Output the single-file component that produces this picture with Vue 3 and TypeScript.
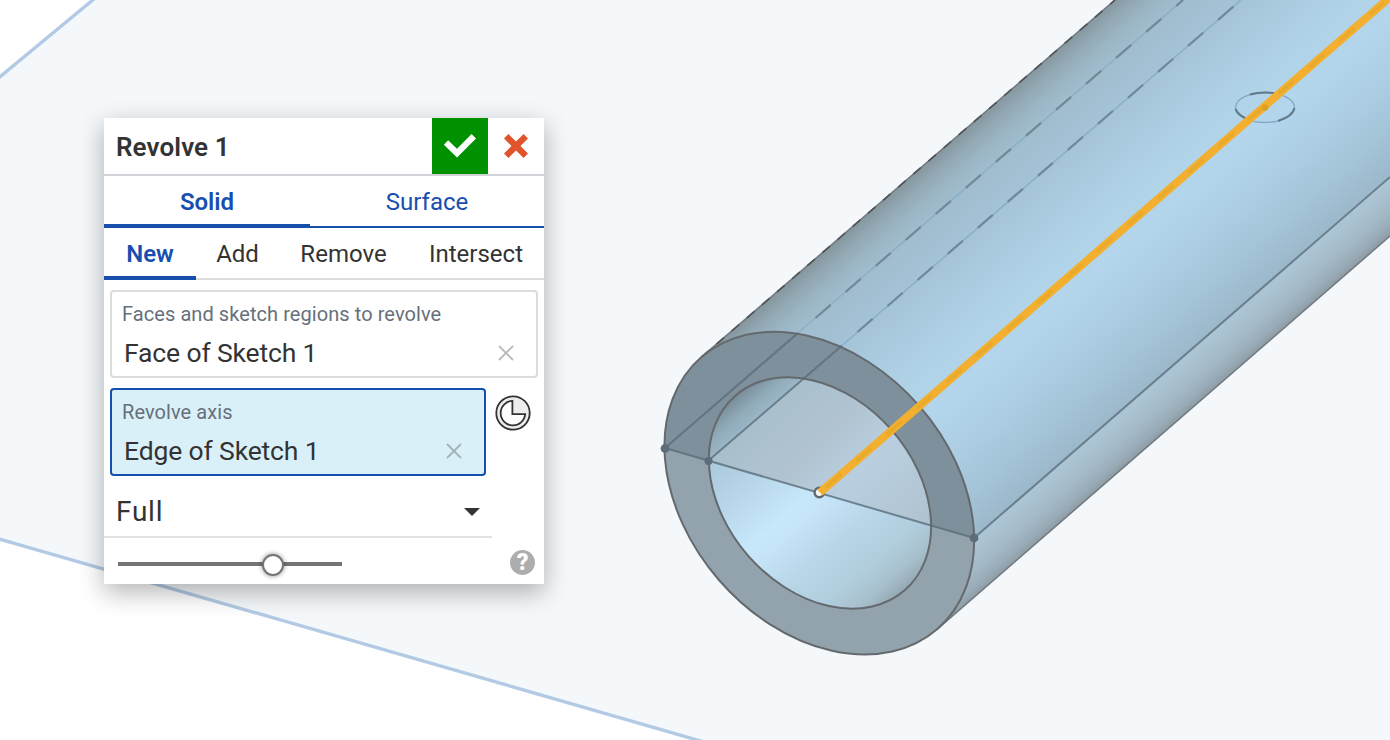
<script setup lang="ts">
import { ref } from 'vue'

const bodyTabs = ['Solid', 'Surface']
const modes = ['New', 'Add', 'Remove', 'Intersect']
const activeTab = ref('Solid')
const activeMode = ref('New')
const opacity = ref(69)
</script>

<template>
  <main class="workspace">
    <svg class="viewport" viewBox="0 0 1390 740" width="1390" height="740">
      <defs>
        <!-- Gradients run across the tube, perpendicular to its axis -->
        <linearGradient id="wall" gradientUnits="userSpaceOnUse" x1="701.4" y1="357.2" x2="937.6" y2="628.8">
          <stop offset="0" stop-color="#84959d" />
          <stop offset="0.035" stop-color="#91a6b1" />
          <stop offset="0.08" stop-color="#9bb5c4" />
          <stop offset="0.13" stop-color="#a0bdce" />
          <stop offset="0.22" stop-color="#a4c2d6" />
          <stop offset="0.34" stop-color="#abcce0" />
          <stop offset="0.45" stop-color="#b1d3e8" />
          <stop offset="0.54" stop-color="#b4d6ec" />
          <stop offset="0.6" stop-color="#b0d2e8" />
          <stop offset="0.68" stop-color="#abcce1" />
          <stop offset="0.77" stop-color="#a4c4d8" />
          <stop offset="0.872" stop-color="#9cb9cb" />
          <stop offset="0.878" stop-color="#adc6d6" />
          <stop offset="0.94" stop-color="#a4bac8" />
          <stop offset="0.98" stop-color="#99abb7" />
          <stop offset="1" stop-color="#8e9da6" />
        </linearGradient>
        <linearGradient id="bore" gradientUnits="userSpaceOnUse" x1="735.4" y1="395.6" x2="904.6" y2="590.4">
          <stop offset="0.15" stop-color="#accadd" />
          <stop offset="0.3" stop-color="#b8d6e9" />
          <stop offset="0.48" stop-color="#c7e7fb" />
          <stop offset="0.54" stop-color="#c5e4f8" />
          <stop offset="0.68" stop-color="#b9d7e9" />
          <stop offset="0.84" stop-color="#b0cddd" />
          <stop offset="0.93" stop-color="#a8c0cd" />
          <stop offset="1" stop-color="#95a8b3" />
        </linearGradient>
        <linearGradient id="sketchFace" gradientUnits="userSpaceOnUse" x1="757" y1="420" x2="895" y2="560">
          <stop offset="0" stop-color="#a9bfcc" />
          <stop offset="0.3" stop-color="#b1c3d0" />
          <stop offset="0.55" stop-color="#b9cfe0" />
          <stop offset="1" stop-color="#afc2cf" />
        </linearGradient>
        <linearGradient id="boreShade" gradientUnits="userSpaceOnUse" x1="735.4" y1="395.6" x2="757" y2="420.5">
          <stop offset="0" stop-color="#788c98" />
          <stop offset="0.5" stop-color="#8fa9b7" />
          <stop offset="1" stop-color="#9bb8c9" />
        </linearGradient>
        <clipPath id="boreClip">
          <ellipse cx="820" cy="493" rx="129" ry="95.4" transform="rotate(49 820 493)" />
        </clipPath>
        <clipPath id="rimClip">
          <ellipse cx="819.3" cy="493.2" rx="180" ry="132.700" transform="rotate(49 819.3 493.2)" />
        </clipPath>
      </defs>

      <rect width="1390" height="740" fill="#fff" />
      <path d="M0 77 94 0H1390V740H702L0 539Z" fill="#f4f8fb" />
      <path d="M-4 80 94 -1M-4 538 704 742" class="plane-edge" />

      <path d="M701.4 357.2 1115 0H1390V236L937.6 628.8Z" fill="url(#wall)" />
      <path d="M701.4 357.2 1115 0M1390 236 937.6 628.8" class="edge soft" />
      <path d="M701.4 357.2 1115 0" class="edge outline-dash" />
      <path d="M798 333 1183 0M842 345.500 1241 0" class="hidden-line" />
      <path d="M815.500 318 1183 0M857.500 332 1241 0" class="hidden-dash" />
      <path d="M974 538 1390 177" class="seam" />

      <g clip-path="url(#rimClip)">
        <rect x="650" y="320" width="340" height="350" fill="#93a3ad" />
        <path d="M640 441 1000 545V300H640Z" fill="#7e909b" />
      </g>
      <g clip-path="url(#boreClip)">
        <rect x="690" y="370" width="260" height="250" fill="url(#bore)" />
        <path d="M700 458.500 940 527.500V370H700Z" fill="url(#sketchFace)" />
        <path d="M708 461 815 368H700Z" fill="url(#boreShade)" />
      </g>
      <path d="M665 448 798 333M708 461 842 345.500" class="seam" />
      <path d="M665 448 974 538" class="seam" />
      <ellipse cx="820" cy="493" rx="129" ry="95.4" transform="rotate(49 820 493)" class="edge" />
      <ellipse cx="819.3" cy="493.2" rx="180" ry="132.700" transform="rotate(49 819.3 493.2)" class="edge" />

      <circle cx="665" cy="448.500" r="4.400" class="vertex" />
      <circle cx="708.500" cy="461" r="4" class="vertex" />
      <circle cx="974" cy="538" r="4.400" class="vertex" />

      <ellipse cx="1265" cy="107.500" rx="29.500" ry="15" class="origin-light" />
      <path d="M1250 94.500Q1261 91.500 1274 93M1235.500 109Q1238 115 1247 119M1294.500 108Q1293 116 1278 121" class="origin-dark" />

      <circle cx="819.300" cy="492.500" r="4.700" class="origin-point" />
      <path d="M820 492.500 1392 -4.500" class="axis" />
      <path d="M826 487.300 1392 -4.500" class="axis-core" />
      <circle cx="1265" cy="107.500" r="3.300" fill="#dea124" />
    </svg>

    <section class="dialog">
      <header class="title-bar">
        <h1>Revolve 1</h1>
        <button class="accept" aria-label="Accept">
          <svg viewBox="0 0 56 56"><path d="M14 24.500 25 35.200 41.800 18.200" /></svg>
        </button>
        <button class="cancel" aria-label="Cancel">
          <svg viewBox="0 0 56 56"><path d="M18.200 18.200 37.800 37.800M37.800 18.200 18.200 37.800" /></svg>
        </button>
      </header>

      <nav class="tabs">
        <button
          v-for="tab in bodyTabs"
          :key="tab"
          :class="[tab.toLowerCase(), { active: tab === activeTab }]"
          @click="activeTab = tab"
        >{{ tab }}</button>
      </nav>

      <nav class="modes">
        <button
          v-for="mode in modes"
          :key="mode"
          :class="[mode.toLowerCase(), { active: mode === activeMode }]"
          @click="activeMode = mode"
        >{{ mode }}</button>
      </nav>

      <div class="field">
        <div class="label">Faces and sketch regions to revolve</div>
        <div class="value"><span>Face of Sketch 1</span>
          <svg class="clear" viewBox="0 0 16 16"><path d="M1 1 15 15M15 1 1 15" /></svg>
        </div>
      </div>

      <div class="axis-row">
        <div class="field focused">
          <div class="label">Revolve axis</div>
          <div class="value"><span>Edge of Sketch 1</span>
            <svg class="clear" viewBox="0 0 16 16"><path d="M1 1 15 15M15 1 1 15" /></svg>
          </div>
        </div>
        <svg class="mate" viewBox="0 0 36 36">
          <circle cx="18" cy="18" r="16.700" fill="#ededed" />
          <path d="M17.400 5.800A12.300 12.300 0 1 0 30.200 19.200H17.400Z" fill="#fff" />
        </svg>
      </div>

      <div class="select">
        <span>Full</span>
        <svg viewBox="0 0 16 8"><path d="M0 0H16L8 8Z" fill="#333" /></svg>
      </div>

      <footer class="footer">
        <div class="slider">
          <div class="knob" :style="{ left: opacity + '%' }"></div>
        </div>
        <div class="help">?</div>
      </footer>
    </section>
  </main>
</template>

<style>
body {
  margin: 0;
  overflow: hidden;
}
</style>

<style scoped>
.workspace {
  position: relative;
  width: 1390px;
  height: 740px;
  overflow: hidden;
  font-family: Roboto, "Liberation Sans", sans-serif;
  color: #333;
}
.viewport { display: block; }
.plane-edge { fill: none; stroke: #b2cae4; stroke-width: 3.4; }
.edge { fill: none; stroke: #64696e; stroke-width: 2; }
.soft { stroke: #737b81; stroke-width: 1.6; }
.outline-dash { stroke: #505356; stroke-width: 1.6; stroke-dasharray: 10 10; }
.hidden-line { fill: none; stroke: #8aafc9; stroke-width: 1.6; }
.hidden-dash { fill: none; stroke: #718899; stroke-width: 2.2; stroke-dasharray: 20 19.75; }
.seam { fill: none; stroke: #5a6d7a; stroke-opacity: .8; stroke-width: 2; }
.vertex { fill: #5c6c78; }
.origin-light { fill: none; stroke: #86aac5; stroke-width: 1.5; }
.origin-dark { fill: none; stroke: #62798a; stroke-width: 2; }
.origin-point { fill: #f4f4f2; stroke: #5f686f; stroke-width: 2.4; }
.axis { fill: none; stroke: #f3b030; stroke-width: 8; }
.axis-core { fill: none; stroke: #e9aa2c; stroke-width: 3.4; stroke-dasharray: 20 20; }

.dialog {
  position: absolute;
  left: 104px;
  top: 118px;
  width: 440px;
  height: 466px;
  box-sizing: border-box;
  background: rgba(255, 255, 255, .97);
  box-shadow: 0 8px 24px rgba(0, 0, 0, .3);
}
button {
  margin: 0;
  padding: 0;
  border: 0;
  background: none;
  font: inherit;
  color: inherit;
}
.title-bar {
  display: flex;
  height: 56px;
  background: #fff;
  border-bottom: 2px solid #d2d3d8;
}
h1 {
  flex: 1;
  margin: 0;
  padding-left: 12px;
  font-size: 26px;
  line-height: 58px;
  font-weight: 600;
  letter-spacing: .1px;
}
.title-bar button, .title-bar svg { display: block; width: 56px; height: 56px; }
.title-bar path { fill: none; stroke-width: 6.2; }
.accept { background: #009100; }
.accept path { stroke: #fff; }
.cancel path { stroke: #e0532b; }

.tabs, .modes { display: flex; height: 52px; font-size: 24px; }
.tabs { box-shadow: inset 0 -2px #174fad; color: #174fb0; }
.tabs button, .modes button {
  box-sizing: border-box;
  padding-top: 4px;
  border-bottom: 4px solid transparent;
  line-height: 44px;
}
.tabs .solid { width: 206px; }
.tabs .surface { flex: 1; }
.modes { box-shadow: inset 0 -2px #dbdddc; }
.modes .new { width: 92px; }
.modes .add { width: 83px; }
.modes .remove { width: 129px; }
.modes .intersect { width: 136px; }
.tabs .active, .modes .active { font-weight: 600; color: #174fb0; border-bottom-color: #174fad; }

.field {
  box-sizing: border-box;
  width: 428px;
  height: 88px;
  margin: 10px 6px 0;
  padding: 7px 22px 0 10px;
  border: 2px solid #dbdddc;
  border-radius: 4px;
  background: #fff;
}
.label { height: 30px; line-height: 30px; font-size: 20px; letter-spacing: .07px; color: #66707b; white-space: nowrap; }
.value {
  display: flex;
  align-items: center;
  justify-content: space-between;
  height: 46px;
  padding-left: 2px;
  font-size: 26.500px;
  letter-spacing: -.14px;
  white-space: nowrap;
}
.clear { width: 16px; height: 16px; margin-top: 2px; }
.clear path { fill: none; stroke: #b8baba; stroke-width: 1.8; }
.axis-row { display: flex; }
.focused { width: 376px; background: #daf0f9; border-color: #174fad; }
.focused .clear path { stroke: #a3b3ba; }
.mate { width: 36px; height: 36px; margin: 17px 0 0 2.500px; }
.mate * { stroke: #333; stroke-width: 1.8; }

.select {
  display: flex;
  align-items: center;
  justify-content: space-between;
  box-sizing: border-box;
  width: 388px;
  height: 62px;
  padding: 10px 12px 0;
  border-bottom: 2px solid #e1e3e2;
  font-size: 28px;
  letter-spacing: .75px;
}
.select svg { width: 16px; height: 8px; margin-top: 1px; }

.footer { display: flex; justify-content: space-between; padding: 12px 9px 0 14px; }
.slider { position: relative; width: 224px; height: 4px; margin-top: 12px; background: #757575; }
.knob {
  position: absolute;
  top: -8px;
  width: 18px;
  height: 18px;
  margin-left: -10.500px;
  border: 2px solid #757575;
  border-radius: 50%;
  background: #fff;
  box-shadow: 0 0 5px rgba(0, 0, 0, .45);
}
.help {
  width: 25px;
  height: 25px;
  border-radius: 50%;
  background: #adadad;
  color: #fff;
  font-size: 23px;
  line-height: 26px;
  font-weight: 900;
  text-align: center;
}
</style>
